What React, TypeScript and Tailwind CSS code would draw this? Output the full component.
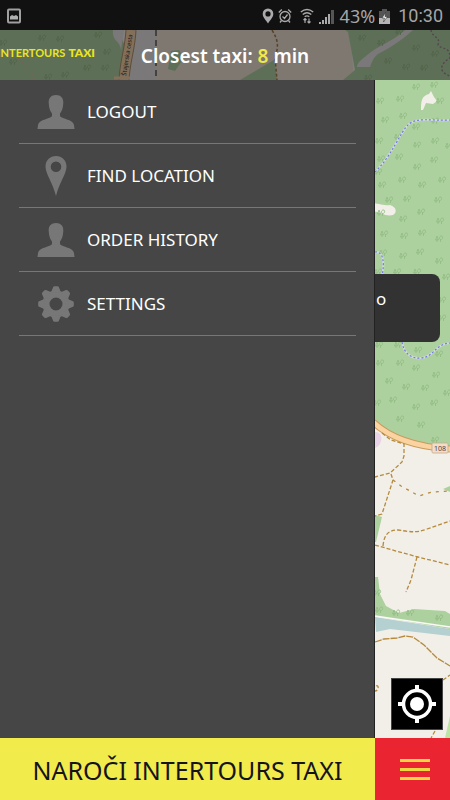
import React from "react";

type Point = [number, number];

const TREES: Point[] = [
  [3, 43], [42, 38], [60, 39], [98, 35], [13, 62], [37, 54], [105, 68], [87, 68], [107, 52], [65, 75], [48, 77],
  [362, 38], [381, 43], [399, 32], [435, 54], [388, 61], [406, 67], [424, 68], [416, 48], [368, 78],
  [416, 87], [434, 85], [400, 99], [380, 101], [440, 101], [403, 116], [385, 120], [416, 127], [435, 121],
  [379, 141], [398, 137], [435, 141], [417, 145], [449, 146], [381, 159], [399, 157], [417, 167], [434, 160],
  [378, 172], [402, 180], [382, 185], [422, 185], [442, 180], [389, 200], [407, 199], [438, 200], [381, 213],
  [403, 219], [421, 212], [440, 221], [384, 234], [404, 236], [422, 233], [439, 239], [383, 253], [403, 256],
  [420, 252], [439, 261], [378, 272], [397, 272], [417, 272], [446, 277], [442, 300], [442, 318],
  [379, 345], [398, 345], [418, 350], [439, 354], [380, 363], [400, 363], [416, 368], [436, 375], [389, 381],
  [406, 387], [425, 388], [447, 393], [393, 400], [377, 403], [416, 407], [434, 403], [400, 419], [421, 425],
  [435, 440], [377, 593], [379, 610], [396, 613], [410, 613], [439, 618],
];

function MapCanvas() {
  return (
    <svg
      className="absolute inset-0 h-full w-full"
      viewBox="0 30 450 708"
      preserveAspectRatio="xMaxYMin slice"
      aria-hidden="true"
    >
      <rect y="30" width="450" height="708" fill="#f2efe9" />
      {/* header strip */}
      <path d="M0 30H118L132 62L120 80H0Z" fill="#add19e" />
      <path d="M113 30H124L121 50C120 40 112 42 113 30Z" fill="#e4e2e2" />
      <path d="M134 30H156V80H126Z" fill="#e4e2e2" />
      <path d="M156 30H350L354 80H156Z" fill="#ede2d2" />
      <path d="M131 30C130 50 125 60 124 80" stroke="#a98a63" strokeWidth="11" fill="none" />
      <path d="M131 30C130 50 125 60 124 80" stroke="#f5d3a4" strokeWidth="9" fill="none" />
      <path d="M114 78H130" stroke="#f5d3a4" strokeWidth="3" />
      <text
        transform="translate(126 76) rotate(-81)"
        fontSize="6"
        fontFamily="Noto Sans, sans-serif"
        fill="#222"
      >
        Štajerska cesta
      </text>
      <path d="M156 30V80" stroke="#777" strokeWidth="2" strokeDasharray="6 4" />
      <path d="M171 51L179 50L184 58L175 71L168 69Z" fill="#add19e" />
      <path d="M240 80L274 60L277 80Z" fill="#add19e" />
      <path d="M272 30C278 40 279 45 275 58L277 80" stroke="#a5743a" strokeWidth="1.5" strokeDasharray="3 2" fill="none" />
      <path d="M345 30H450V448C410 445 392 438 375 422V80H343L355 70L348 32Z" fill="#add19e" />
      <path d="M405 30C393 42 378 45 366 56C361 60 357 63 357 67H370C372 62 373 58 378 54C389 48 400 42 413 30Z" fill="#e4e2e2" />
      <path d="M431 30C432 38 441 36 438 45C442 50 450 46 450 58C440 64 438 72 450 76" stroke="#98838c" strokeWidth="1.5" strokeDasharray="2 2" fill="none" />
      <path d="M10 52C22 60 28 68 36 80" stroke="#e3b09a" strokeWidth="1" strokeDasharray="3 2" fill="none" />

      {/* clearings, river and meadows */}
      <path d="M421 110C421 100 422 96 429 94L431 91L434 97L437 101L433 104L426 103L423 110Z" fill="#f2efe9" />
      <path d="M372 203C381 204 386 206 390 205C397 207 397 213 393 215C386 217 381 212 372 211Z" fill="#f2efe9" />
      <path d="M375 432C384 432 383 445 375 448Z" fill="#e9d3e6" />
      <path d="M375 515L382 517L376 542H375Z" fill="#add19e" />
      <path d="M443 489L450 486V492Z" fill="#add19e" />
      <path d="M375 577L378 577L380 594L386 606L399 613L414 609L445 611L450 614V629L375 616Z" fill="#add19e" />
      <path d="M375 617L450 629V636L390 629L376 632Z" fill="#b5d0d0" />
      <path d="M375 616L450 627" stroke="#faf9f6" strokeWidth="1.5" />
      <path d="M450 716L445 738H450Z" fill="#bde3a5" />

      <g stroke="#93bd86" strokeWidth="0.9" fill="none">
        {TREES.map(([x, y]) => (
          <path
            key={`${x}-${y}`}
            transform={`translate(${x} ${y})`}
            d="M-2 3V0M-3.5 1L-2 -3L-0.5 1ZM1.5 3V0M3 -3C0 -3.5 0 0.5 1.5 0.5C4 0.5 4 -2 3 -3"
          />
        ))}
      </g>

      {/* paths along the water */}
      <g fill="none">
        <g stroke="#cfdcd9" strokeWidth="2">
          <path d="M375 172C392 156 400 132 409 124C418 117 430 121 450 120" />
          <path d="M375 252C383 251 385 262 382 276V330" />
          <path d="M402 342C404 354 412 359 421 358C434 357 435 344 450 343" />
        </g>
        <g stroke="#7378dd" strokeWidth="1.2" strokeDasharray="2 2">
          <path d="M375 172C392 156 400 132 409 124C418 117 430 121 450 120" />
          <path d="M375 252C383 251 385 262 382 276V330" />
          <path d="M402 342C404 354 412 359 421 358C434 357 435 344 450 343" />
        </g>
        <path d="M373 422C392 440 418 447 450 449" stroke="#c99a5c" strokeWidth="7" />
        <path d="M373 422C392 440 418 447 450 449" stroke="#fbd3a0" strokeWidth="5" />
        <g stroke="#b58a3c" strokeWidth="1.3" strokeDasharray="4 2">
          <path d="M382 433L391 440L404 444V456L402 462L390 473L375 477" />
          <path d="M391 474L393 480L382 514L375 516" />
          <path d="M393 480L401 486L419 496L432 492L450 491" strokeDasharray="3 5" />
          <path d="M383 546C384 535 388 530 398 530C412 532 416 533 427 529L450 521" />
          <path d="M375 545L396 551L418 557L450 565" />
          <path d="M417 557L411 580L406 592" />
          <path d="M375 642L384 639L397 638L405 636L413 637L424 645L437 658L450 666" strokeDasharray="7 1" />
          <path d="M376 686C379 684 379 691 375 691M435 731L431 738M443 680L450 675" />
        </g>
      </g>
      <rect x="432" y="443" width="16" height="10" rx="1" fill="#f4dcc8" stroke="#c6a98b" strokeWidth="0.8" />
      <text x="440" y="451" textAnchor="middle" fontSize="7" fontFamily="Noto Sans, sans-serif" fill="#444">
        108
      </text>
    </svg>
  );
}

function PersonIcon() {
  return (
    <svg viewBox="0 0 38 36" className="h-9 w-[38px]" fill="#777" aria-hidden="true">
      <path d="M19 1C24 1 26.500 4 26.300 9C26 14 25 17 23 19.500V22C24 25 36 25 37 31L37.500 35H.5L1 31C2 25 14 25 15 22V19.500C13 17 12 14 11.700 9C11.500 4 14 1 19 1Z" />
    </svg>
  );
}

function PinIcon() {
  return (
    <svg viewBox="0 0 22 40" className="h-10 w-[22px]" fill="#777" aria-hidden="true">
      <path fillRule="evenodd" d="M11 0C17 0 21.500 4.500 21.500 10.500C21.500 18 14.500 26 11 40C7.500 26 .5 18 .5 10.500C.5 4.500 5 0 11 0ZM11 5.500A5.300 5.300 0 1 0 11 16.100A5.300 5.300 0 1 0 11 5.500Z" />
    </svg>
  );
}

function GearIcon() {
  return (
    <svg viewBox="-18 -18 36 36" className="size-9" aria-hidden="true">
      <circle r="10" fill="none" stroke="#777" strokeWidth="7" />
      <g fill="#777">
        {[0, 45, 90, 135, 180, 225, 270, 315].map((angle) => (
          <path key={angle} transform={`rotate(${angle})`} d="M-5 -11.500L-2.800 -17Q-2.500 -17.800 -1.500 -17.800H1.500Q2.500 -17.800 2.800 -17L5 -11.500Z" />
        ))}
      </g>
    </svg>
  );
}

const MENU = [
  { label: "LOGOUT", Icon: PersonIcon },
  { label: "FIND LOCATION", Icon: PinIcon },
  { label: "ORDER HISTORY", Icon: PersonIcon },
  { label: "SETTINGS", Icon: GearIcon },
];

function StatusBar() {
  return (
    <div className="flex h-[30px] shrink-0 items-center bg-[#111] px-[7px] pt-0.5 font-[Roboto,sans-serif] text-lg text-[#a6a6a6]">
      <svg viewBox="0 0 14 16" className="h-4 w-3.5" aria-hidden="true">
        <rect x="1" y="1.500" width="12" height="13" rx="1" fill="none" stroke="#a0a0a0" strokeWidth="2" />
        <path d="M3 11.500V8.500L5 7L7 8L9 7L11 8.500V11.500Z" fill="#b0b0b0" />
      </svg>
      <div className="ml-auto flex items-center">
        <svg viewBox="0 0 12 16" className="mr-1 h-4 w-3" aria-hidden="true">
          <path fillRule="evenodd" fill="#aaa" d="M6 .5A5.300 5.300 0 0 1 11.300 6C11.300 9.500 8 12 6 15.500C4 12 .7 9.500 .7 6A5.300 5.300 0 0 1 6 .5ZM6 3.300A2.600 2.600 0 1 0 6 8.500A2.600 2.600 0 1 0 6 3.300Z" />
        </svg>
        <svg viewBox="0 0 14 16" className="mr-2 h-4 w-3.5" fill="none" stroke="#aaa" strokeWidth="1.300" aria-hidden="true">
          <circle cx="7" cy="8.500" r="5" />
          <path d="M4.500 8.500L6.500 10.500L9.500 6.500M.8 4.500L3.800 1.500M13.200 4.500L10.200 1.500M3.500 12.500L2 14.500M10.500 12.500L12 14.500" />
        </svg>
        <svg viewBox="0 0 14 16" className="mr-[5px] h-4 w-3.5" fill="none" stroke="#aaa" strokeWidth="1.400" aria-hidden="true">
          <path d="M.8 4Q7 -1 13.200 4M2.700 6.500Q7 3 11.300 6.500M4.700 8.800Q7 7 9.300 8.800" />
          <path d="M5 15V10.500M3.500 12L5 10.500L6.500 12M9 10.500V15M7.500 13.500L9 15L10.500 13.500" strokeWidth="1.200" />
        </svg>
        <svg viewBox="0 0 15 15" className="mr-1.5 h-[15px] w-[15px]" fill="#aaa" aria-hidden="true">
          <path d="M0 13H2V15H0ZM3 11H5V15H3ZM6 8H8V15H6ZM9 5H11V15H9Z" />
          <path d="M12 1H15V15H12Z" fill="#555" />
        </svg>
        <span className="font-['Noto_Sans',sans-serif]">43%</span>
        <svg viewBox="0 0 11 15" className="mr-2 ml-1 h-[15px] w-[11px]" aria-hidden="true">
          <path d="M3 0H8V2H11V15H0V2H3Z" fill="#555" />
          <path d="M0 9H11V15H0Z" fill="#b5b5b5" />
          <path d="M6.500 3.500L3 9H5.500L4.500 13L8.500 7.500H6Z" fill="#eee" stroke="#222" strokeWidth=".5" />
        </svg>
        <time>10:30</time>
      </div>
    </div>
  );
}

export default function App() {
  return (
    <div className="flex min-h-screen flex-col overflow-hidden bg-[#464646] font-['Noto_Sans',sans-serif]">
      <StatusBar />
      <div className="relative flex flex-1 flex-col">
        <MapCanvas />
        <header className="relative grid h-[50px] shrink-0 grid-cols-[1fr_auto_1fr] items-center bg-[#100e10]/50">
          <div className="flex w-[95px] items-center justify-end gap-[3px] overflow-hidden pb-1 font-[Lato,sans-serif] whitespace-nowrap text-[#ebe51f]">
            <span className="text-[11px] font-bold">INTERTOURS</span>
            <span className="text-xs font-black">TAXI</span>
          </div>
          <h1 className="pt-0.5 text-[19px] font-semibold text-white">
            Closest taxi: <span className="text-[#efe94a]">8</span> min
          </h1>
        </header>
        <div className="relative grid flex-1 grid-cols-[5fr_1fr]">
          <nav className="border-r border-[#222] bg-[#464646] pr-[18px] pl-[19px]" aria-label="Main menu">
            <ul>
              {MENU.map(({ label, Icon }) => (
                <li key={label} className="border-b border-[#777]">
                  <button type="button" className="flex h-[63px] w-full items-center text-[17px] text-white">
                    <span className="mr-3 ml-[18px] flex w-[38px] justify-center">
                      <Icon />
                    </span>
                    {label}
                  </button>
                </li>
              ))}
            </ul>
          </nav>
          <main className="flex flex-col pt-[194px]">
            <div className="mr-2.5 h-[68px] rounded-r-lg bg-[#323232] pt-3 pl-px text-[17px] text-white">o</div>
            <button
              type="button"
              aria-label="Show my location"
              className="mt-auto mr-[7px] mb-2 flex size-[52px] items-center justify-center self-end border border-[#444] bg-black"
            >
              <svg viewBox="-19 -19 38 38" className="size-[38px]" aria-hidden="true">
                <circle r="7" fill="#fff" />
                <circle r="13.500" fill="none" stroke="#fff" strokeWidth="3.500" />
                <path d="M0 -19V-13M0 19V13M-19 0H-13M19 0H13" stroke="#fff" strokeWidth="4" />
              </svg>
            </button>
          </main>
        </div>
      </div>
      <footer className="grid h-[62px] shrink-0 grid-cols-[5fr_1fr]">
        <button type="button" className="bg-[#f1eb4b] pt-1 text-[25px] whitespace-nowrap text-[#151320]">
          NAROČI INTERTOURS TAXI
        </button>
        <button type="button" aria-label="Menu" className="flex flex-col items-center justify-center gap-1.5 bg-[#eb2432] pl-1">
          <span className="h-[3px] w-[30px] bg-[#efd744]" />
          <span className="h-[3px] w-[30px] bg-[#efd744]" />
          <span className="h-[3px] w-[30px] bg-[#efd744]" />
        </button>
      </footer>
    </div>
  );
}
